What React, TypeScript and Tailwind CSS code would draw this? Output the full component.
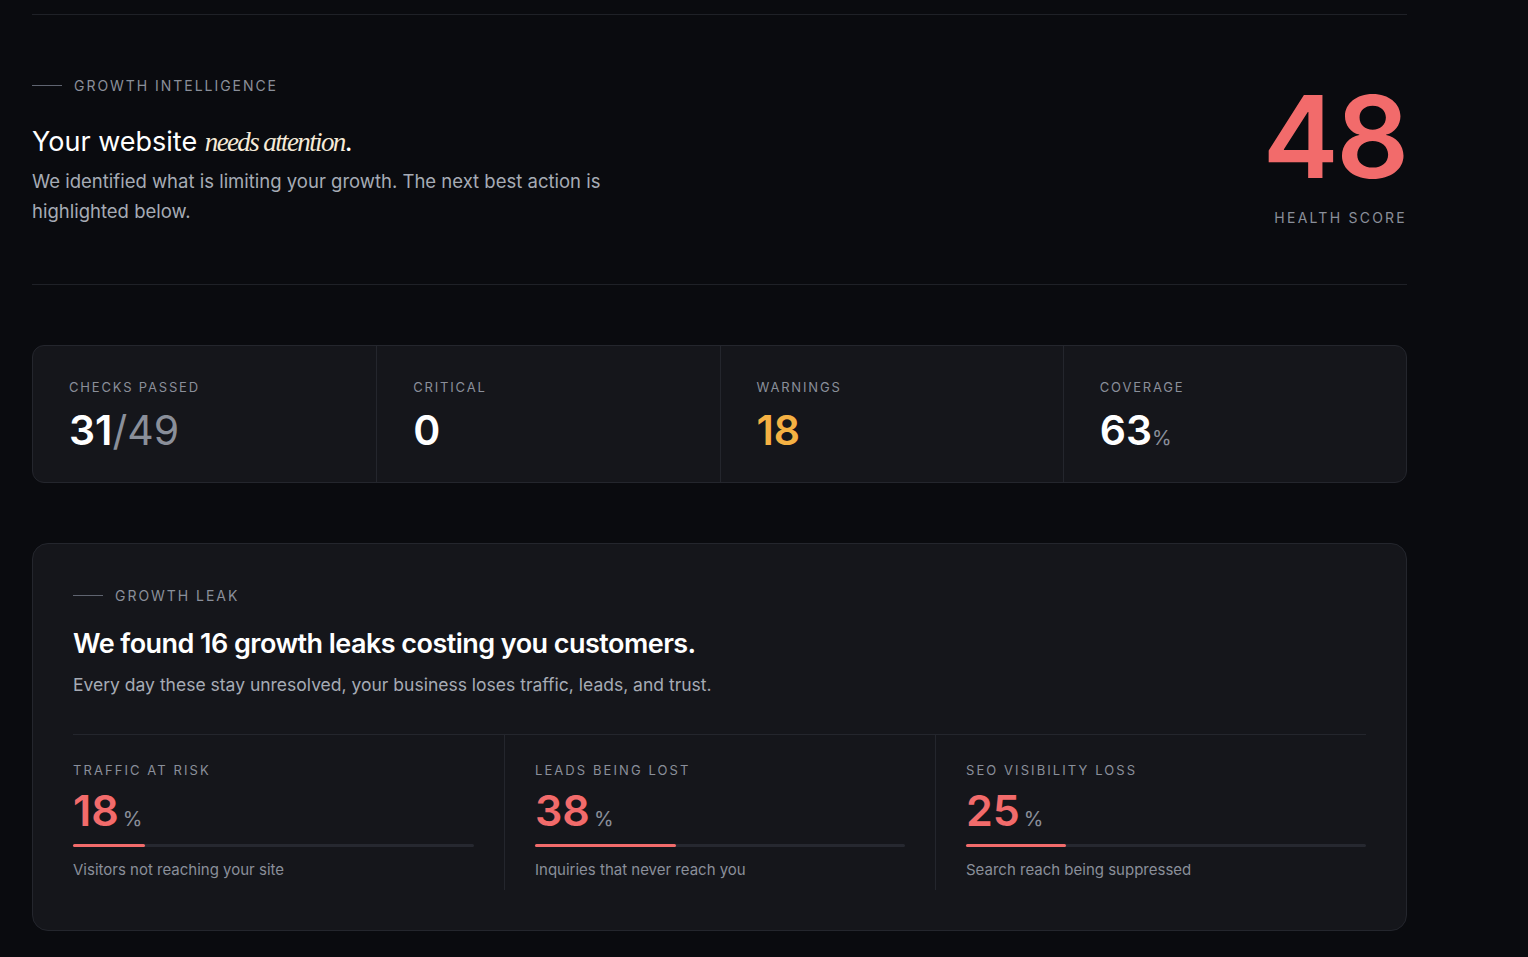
const font = { fontFamily: "Inter, 'Noto Sans', sans-serif" };

function Stat({ label, children, first }: { label: string; children: React.ReactNode; first?: boolean }) {
  return (
    <div className={`flex flex-col px-9 pt-8 pb-5 ${first ? "" : "border-l border-[#24262d]"}`}>
      <span className="text-[13px] tracking-[0.14em] text-[#8a8f9a]">{label}</span>
      <div className="mt-2 text-[41px] font-semibold leading-[48px]">{children}</div>
    </div>
  );
}

function Leak({ label, value, note, pad }: { label: string; value: number; note: string; pad: string }) {
  return (
    <div className={`flex flex-col pt-[26px] pb-2 ${pad}`}>
      <span className="text-[13px] tracking-[0.16em] text-[#8a8f9a]">{label}</span>
      <div className="mt-1 flex items-baseline gap-1">
        <span className="text-[43px] font-semibold leading-[52px] text-[#f26b6b]">{value}</span>
        <span className="text-[20px] text-[#8a8f9a]">%</span>
      </div>
      <div className="mt-2 h-[3px] w-full rounded bg-[#262830]">
        <div className="h-full rounded bg-[#f26b6b]" style={{ width: `${value}%` }} />
      </div>
      <span className="mt-3 text-[15px] text-[#8a8f9a]">{note}</span>
    </div>
  );
}

export default function App() {
  return (
    <div className="min-h-[957px] bg-[#0a0b0f] text-white" style={font}>
      <div className="ml-8 w-[1375px] pt-[14px]">
        <div className="border-t border-[#1f2127]" />
        <div className="flex items-start justify-between pt-[60px] pb-[56px] border-b border-[#1f2127]">
          <div>
            <div className="flex items-center gap-3">
              <span className="h-px w-[30px] bg-[#5f6470]" />
              <span className="text-[14px] tracking-[0.14em] text-[#8a8f9a]">GROWTH INTELLIGENCE</span>
            </div>
            <h1 className="mt-[26px] text-[27px] leading-[40px]">
              Your website{" "}
              <span className="italic tracking-[-0.06em] text-[#f5ead8]" style={{ fontFamily: "'Liberation Serif', serif" }}>
                needs attention
              </span>
              .
            </h1>
            <p className="mt-1 w-[620px] text-[18.5px] leading-[30px] text-[#a6abb5]">
              We identified what is limiting your growth. The next best action is highlighted below.
            </p>
          </div>
          <div className="flex flex-col items-end pt-[10px]">
            <span className="text-[114px] font-semibold leading-[104px] tracking-[-0.02em] text-[#f26b6b]">48</span>
            <span className="mt-[18px] text-[14px] tracking-[0.16em] text-[#8a8f9a]">HEALTH SCORE</span>
          </div>
        </div>

        <div className="mt-[60px] grid grid-cols-4 rounded-xl border border-[#24262d] bg-[#15161b]">
          <Stat label="CHECKS PASSED" first>
            31<span className="font-normal text-[#8a8f9a]">/49</span>
          </Stat>
          <Stat label="CRITICAL">0</Stat>
          <Stat label="WARNINGS">
            <span className="text-[#f5b143]">18</span>
          </Stat>
          <Stat label="COVERAGE">
            63<span className="text-[20px] font-normal text-[#8a8f9a]">%</span>
          </Stat>
        </div>

        <div className="mt-[60px] rounded-2xl border border-[#24262d] bg-[#15161b] px-10 pt-[41px] pb-10">
          <div className="flex items-center gap-3">
            <span className="h-px w-[30px] bg-[#5f6470]" />
            <span className="text-[14px] tracking-[0.14em] text-[#8a8f9a]">GROWTH LEAK</span>
          </div>
          <h2 className="mt-[18px] text-[27px] font-semibold leading-[40px] tracking-[-0.02em]">
            We found 16 growth leaks costing you customers.
          </h2>
          <p className="mt-[8px] text-[17.5px] text-[#a6abb5]">
            Every day these stay unresolved, your business loses traffic, leads, and trust.
          </p>
          <div className="mt-[36px] grid grid-cols-3 border-t border-[#24262d]">
            <Leak label="TRAFFIC AT RISK" value={18} note="Visitors not reaching your site" pad="pr-[30px]" />
            <div className="border-l border-[#24262d]">
              <Leak label="LEADS BEING LOST" value={38} note="Inquiries that never reach you" pad="px-[30px]" />
            </div>
            <div className="border-l border-[#24262d]">
              <Leak label="SEO VISIBILITY LOSS" value={25} note="Search reach being suppressed" pad="pl-[30px]" />
            </div>
          </div>
        </div>
      </div>
    </div>
  );
}
